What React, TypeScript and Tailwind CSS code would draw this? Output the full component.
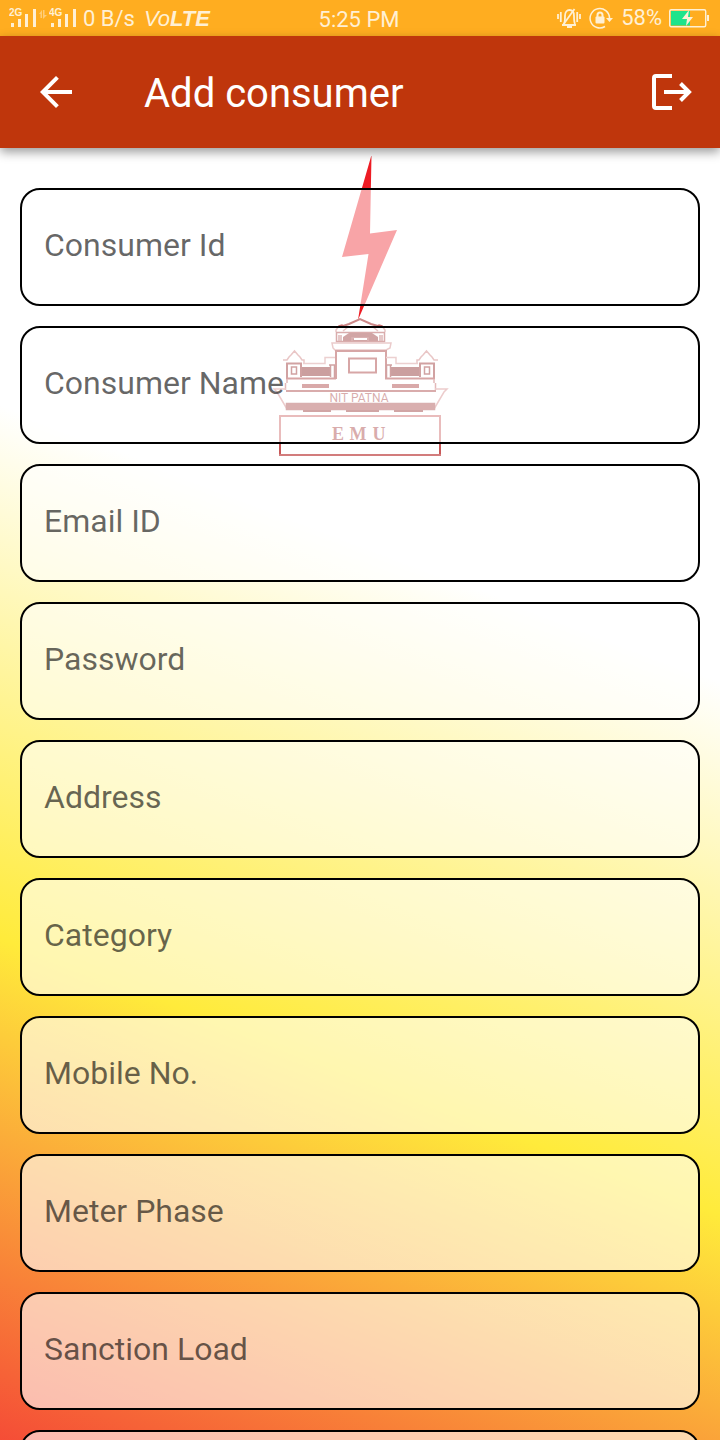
import React from "react";

const fields = [
  "Consumer Id",
  "Consumer Name",
  "Email ID",
  "Password",
  "Address",
  "Category",
  "Mobile No.",
  "Meter Phase",
  "Sanction Load",
  "Meter No.",
];

function SignalBars({ label }: { label: string }) {
  return (
    <svg width="28" height="24" viewBox="0 0 28 24" fill="#fff0d4" aria-label={label + " signal"}>
      <text x="0" y="10" fontSize="10" fontWeight="700" fontFamily="Liberation Sans, sans-serif">{label}</text>
      <rect x="2" y="17" width="3" height="4" />
      <rect x="9" y="13" width="3" height="8" />
      <rect x="16" y="8" width="3" height="13" />
      <rect x="24" y="3" width="3" height="18" />
    </svg>
  );
}

function StatusBar() {
  return (
    <div className="flex h-9 items-center justify-between bg-[#ffad20] pl-[9px] pr-[11px] text-[#fff0d4]">
      <div className="flex flex-1 items-center">
        <SignalBars label="2G" />
        <svg width="12" height="24" viewBox="0 0 12 24" fill="#ffcc77">
          <path d="M2 8L5 4v8H3.500V8zM6 4h1.500v5H10L6 13z" />
        </svg>
        <SignalBars label="4G" />
        <span className="ml-[6px] pt-[2px] text-[22px] leading-8">0 B/s</span>
        <span className="ml-[9px] pt-[2px] font-['Liberation_Sans'] text-[22px] italic leading-8">
          Vo<b>LTE</b>
        </span>
      </div>
      <span className="pt-[4px] text-[22px] leading-8">5:25 PM</span>
      <div className="flex flex-1 items-center justify-end">
        <svg width="24" height="22" viewBox="0 0 24 22" fill="none" stroke="#fff0d4" strokeWidth="1.500">
          <path d="M1 7v5M3.800 5v10M20.200 5v10M23 7v5" strokeWidth="1.800" />
          <path d="M5 18h14M7 17c1-2 1-4 1-8 0-4 2-6 4.500-6S17 5 17 9c0 4 0 6 1 8M10 20h5" strokeWidth="1.800" />
          <path d="M17.500 2L6 18" strokeWidth="1.800" />
        </svg>
        <svg className="ml-2" width="24" height="22" viewBox="0 0 24 22" fill="none" stroke="#fff0d4" strokeWidth="1.500">
          <path d="M20.500 11A9.700 9.700 0 1 0 16 19.500" />
          <path d="M17 11h7l-3.500 4z" fill="#fff0d4" stroke="none" />
          <rect x="6.500" y="9.500" width="9" height="7" rx="1" fill="#fff0d4" stroke="none" />
          <path d="M8.500 10V8a2.500 2.500 0 0 1 5 0v2" strokeWidth="2" />
        </svg>
        <span className="ml-2 text-[22px] leading-9">58%</span>
        <svg className="ml-[7px]" width="40" height="20" viewBox="0 0 40 20">
          <rect x="0.700" y="1.700" width="36" height="17" rx="1.500" fill="none" stroke="#fff0d4" strokeWidth="1.400" />
          <rect x="2" y="3" width="19" height="14.500" fill="#1de48b" />
          <rect x="38" y="7" width="2" height="6" fill="#fff0d4" />
          <path d="M20 2L13 11h5l-1 7 7-9h-5z" fill="#fff0d4" />
        </svg>
      </div>
    </div>
  );
}

function AppBar() {
  return (
    <header className="relative z-10 flex h-28 items-center bg-[#bf360c] px-8 text-white shadow-[0_4px_10px_rgba(0,0,0,0.4)]">
      <button type="button" aria-label="Back">
        <svg width="48" height="48" viewBox="0 0 24 24" fill="currentColor">
          <path d="M20 11H7.830l5.590-5.590L12 4l-8 8 8 8 1.410-1.410L7.830 13H20v-2z" />
        </svg>
      </button>
      <h1 className="ml-16 flex-1 pt-[3px] text-[40px] leading-[48px]">Add consumer</h1>
      <button type="button" aria-label="Log out" className="-mr-1">
        <svg width="40" height="40" viewBox="0 0 40 40" fill="none" stroke="currentColor" strokeWidth="4">
          <path d="M20 4H4a2 2 0 0 0-2 2v28a2 2 0 0 0 2 2h16" />
          <path d="M12 20h26M28.500 11.500L37 20l-8.500 8.500" />
        </svg>
      </button>
    </header>
  );
}

function Wing() {
  return (
    <g>
      <path d="M283 360h4l2-3 2-2 3.500-4 3.500 4 2 2 2 3h2v3" stroke="#c87070" />
      <path d="M303 363.500h22v-6h10" stroke="#d08a8a" />
      <rect x="302" y="367" width="29" height="9" fill="#7e1010" stroke="none" />
      <path d="M287 378v-14.500h14V377" stroke="#8c1818" strokeWidth="2" />
      <path d="M291.500 374v-7h5v7z" stroke="#8c1818" />
      <path d="M329 365h6M330.500 365v12M334.500 365v14" stroke="#8c1818" />
      <path d="M286 378.500h50" stroke="#9c2020" strokeWidth="2" />
      <path d="M287 379v4M285.500 390v-7" stroke="#b85050" />
      <path d="M302 386h27" stroke="#a02828" strokeWidth="4" />
      <path d="M286 389h-12l3 3 10 17" stroke="#d08080" />
    </g>
  );
}

function Emblem() {
  return (
    <svg
      className="absolute left-1/2 top-2 -translate-x-1/2"
      width="180"
      height="304"
      viewBox="270 156 180 304"
      fill="none"
      strokeWidth="1.500"
      aria-hidden="true"
    >
      <path d="M371.500 155L342 257l26.500-3-10.500 66 39-90-27 3.500z" fill="#ed1c24" stroke="none" />
      <g>
        <path d="M343 326l6-2 11-5 11 5 7 2" stroke="#cc8888" strokeWidth="2" />
        <path d="M336 332v-2l3-4 3-1 4 3M385 332v-2l-3-4-3-1-4 3M343 331l5-4h25l5 4" stroke="#c87070" />
        <path d="M336 332.500h49M336.500 332v10M384.500 332v10M336 341.500h49" stroke="#a03030" />
        <path d="M343 341v-4l6-4h23l6 4v4z" fill="#8c2020" stroke="none" />
        <path d="M352 341v-3h16v3M339 335v6M341 335v6M380 335v6M382 335v6" stroke="#a84848" />
        <path d="M354 339h13" stroke="#ffffff" strokeWidth="2" />
        <path d="M332 343h59l-1 5-4 2h-51l-2-2z" stroke="#cc7e7e" />
        <path d="M336 379v-28h50v28" stroke="#9c2222" strokeWidth="2" />
        <rect x="349" y="358.500" width="27" height="14" stroke="#9c2222" strokeWidth="2" />
      </g>
      <Wing />
      <g transform="translate(721 0) scale(-1 1)">
        <Wing />
      </g>
      <path d="M286 391h150" stroke="#a03030" strokeWidth="2" />
      <rect x="286.500" y="403.500" width="148" height="6" fill="#a03838" stroke="#a03838" />
      <path d="M303 411h28M346 411h33M394 411h29" stroke="#8c2020" strokeWidth="2" />
      <path d="M280 455v-39h160v39" stroke="#c85858" strokeWidth="2" />
      <path d="M279 455h162" stroke="#d27c7c" strokeWidth="2" />
      <g fill="#a03030" stroke="none" textAnchor="middle">
        <text x="359" y="402" fontSize="12" fontFamily="Roboto, sans-serif">NIT PATNA</text>
        <g fontSize="18" fontWeight="700" fontFamily="Liberation Serif, serif">
          <text x="338" y="440">E</text>
          <text x="358" y="440">M</text>
          <text x="379" y="440">U</text>
        </g>
      </g>
    </svg>
  );
}

export default function App() {
  return (
    <div className="flex h-screen flex-col overflow-hidden bg-white font-[Roboto,sans-serif]">
      <StatusBar />
      <AppBar />
      <main className="relative min-h-0 flex-1 overflow-hidden bg-[linear-gradient(21deg,#f44336_-2%,#ffeb3b_32%,#ffffff_66%)]">
        <Emblem />
        <form className="relative flex flex-col gap-5 px-5 pt-10">
          {fields.map((name) => (
            <input
              key={name}
              aria-label={name}
              type={name === "Password" ? "password" : "text"}
              placeholder={name}
              className="h-[118px] w-full shrink-0 rounded-[20px] border-2 border-black bg-white/60 px-[22px] pb-1 text-[32px] text-black outline-none placeholder:text-black/60"
            />
          ))}
        </form>
      </main>
    </div>
  );
}
